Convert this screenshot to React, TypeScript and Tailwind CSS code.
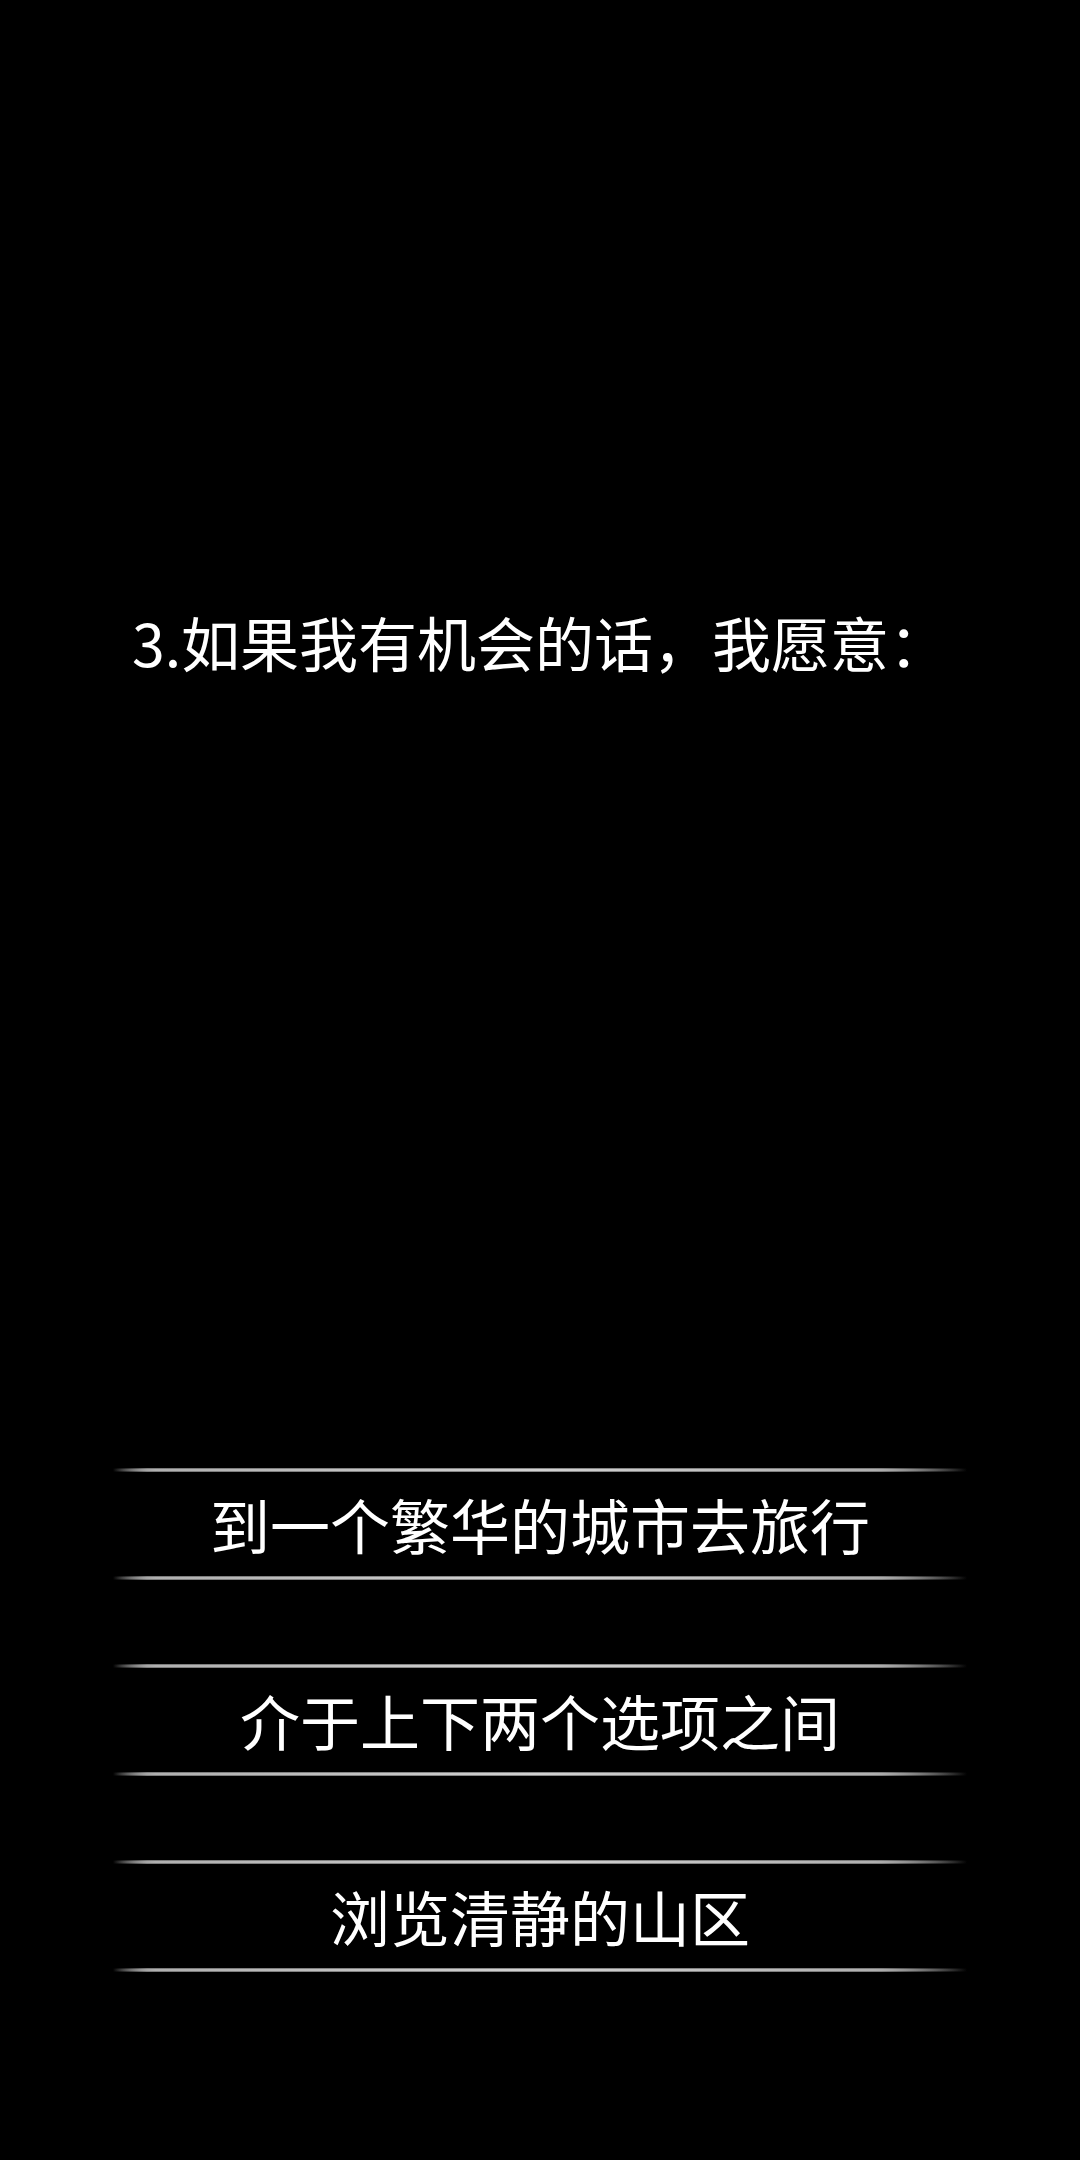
const options = ['到一个繁华的城市去旅行', '介于上下两个选项之间', '浏览清静的山区']

function Rule() {
  return (
    <div className="h-[4px] w-full bg-[linear-gradient(90deg,transparent,#7c7c7c_4%,#8a8a8a_50%,#7c7c7c_90%,transparent)]">
      <div className="mt-[1px] h-[2px] w-full bg-[linear-gradient(90deg,transparent,#b0b0b0_5%,#d2d2d2_50%,#b0b0b0_89%,transparent)]" />
    </div>
  )
}

export default function App() {
  return (
    <div
      className="w-[1080px] h-[2160px] bg-black text-white"
      style={{ fontFamily: '"Noto Sans CJK SC", "Noto Sans", sans-serif' }}
    >
      <div className="pt-[607px] text-center text-[59px] leading-[70px]">
        3.如果我有机会的话，我愿意：
      </div>

      <div className="mt-[791px] flex flex-col gap-[84px] px-[113px]">
        {options.map((opt) => (
          <div key={opt} className="flex flex-col">
            <Rule />
            <div className="h-[104px] flex items-center justify-center text-[60px] leading-none">
              {opt}
            </div>
            <Rule />
          </div>
        ))}
      </div>
    </div>
  )
}
